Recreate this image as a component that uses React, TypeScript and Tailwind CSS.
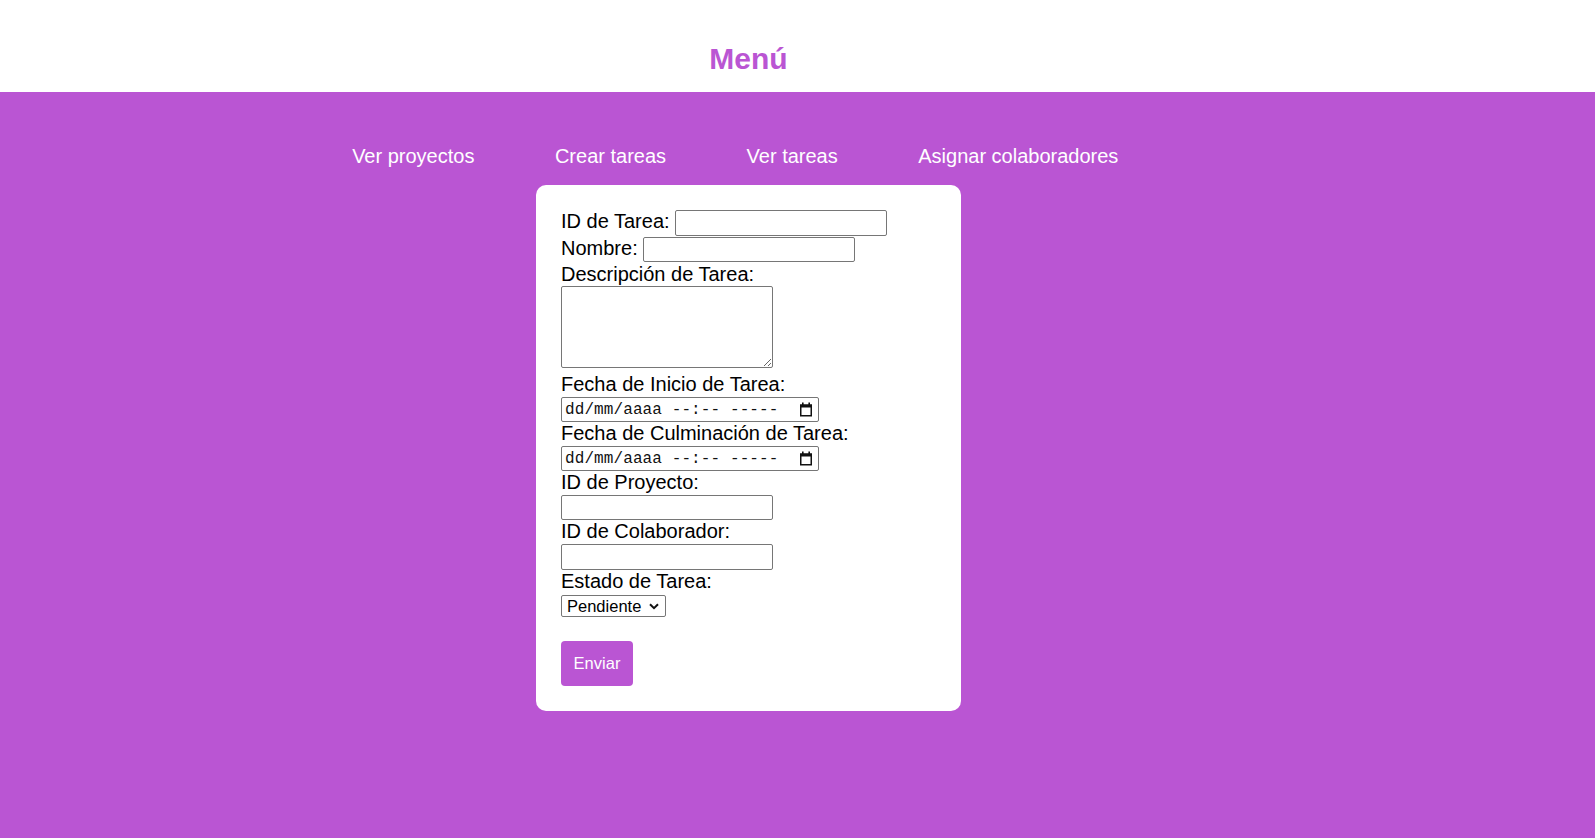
import { ReactNode } from "react";

const purple = "bg-[#ba55d3]";

function Label({ children }: { children: ReactNode }) {
  return <span className="block leading-[23px]">{children}</span>;
}

function TextInput({ w = "w-[212px]", h = "h-[25px]", className = "" }: { w?: string; h?: string; className?: string }) {
  return (
    <input
      type="text"
      className={`${w} ${h} ${className} block border border-[#767676] rounded-[2px] bg-white px-[2px] text-[16px] outline-none`}
    />
  );
}

function CalendarIcon() {
  return (
    <svg width="14" height="15" viewBox="0 0 14 15" fill="none">
      <rect x="1.75" y="3.25" width="10.5" height="10.5" stroke="#111" strokeWidth="1.5" />
      <rect x="1" y="2.5" width="12" height="3" fill="#111" />
      <rect x="3" y="0.5" width="1.6" height="2.5" fill="#111" />
      <rect x="9.4" y="0.5" width="1.6" height="2.5" fill="#111" />
    </svg>
  );
}

function DateBox() {
  return (
    <div className="mt-[1px] w-[258px] h-[25px] border border-[#767676] rounded-[2px] flex items-center justify-between pl-[3px] pr-[5px]">
      <span className="font-['Liberation_Mono',monospace] text-[16px] tracking-[0.1px] leading-none whitespace-pre text-[#111]">
        dd/mm/aaaa --:-- -----
      </span>
      <CalendarIcon />
    </div>
  );
}

export default function App() {
  const links = ["Ver proyectos", "Crear tareas", "Ver tareas", "Asignar colaboradores"];

  return (
    <div className="min-h-screen flex flex-col font-['Liberation_Sans',Arial,sans-serif]">
      {/* Header */}
      <header className="h-[92px] bg-white flex justify-center pr-[98px] pt-[40px]">
        <h1 className="text-[30px] leading-[37px] font-bold text-[#ba55d3]">Menú</h1>
      </header>

      <main className={`flex-1 ${purple} flex flex-col`}>
        {/* Nav */}
        <nav className="flex justify-center gap-[80.5px] pr-[124.5px] pt-[53px] text-white text-[20px] leading-[23px]">
          {links.map((l) => (
            <a key={l} href="#" className="block">
              {l}
            </a>
          ))}
        </nav>

        {/* Form card */}
        <div className="flex justify-center pr-[98px] mt-[17px]">
          <form
            className="w-[425px] bg-white rounded-[10px] px-[25px] pt-[25px] pb-[25px] text-[20px] text-black flex flex-col items-start"
            onSubmit={(e) => e.preventDefault()}
          >
            <div className="flex items-start h-[27px]">
              <span className="leading-[23px]">ID de Tarea:</span>
              <TextInput h="h-[26px]" className="ml-[5px]" />
            </div>
            <div className="flex items-start h-[26px]">
              <span className="leading-[23px]">Nombre:</span>
              <TextInput className="ml-[5px]" />
            </div>

            <Label>Descripción de Tarea:</Label>
            <textarea className="block w-[212px] h-[82px] mb-[5px] border border-[#767676] rounded-[2px] text-[14px] outline-none" />

            <Label>Fecha de Inicio de Tarea:</Label>
            <DateBox />

            <Label>Fecha de Culminación de Tarea:</Label>
            <DateBox />

            <Label>ID de Proyecto:</Label>
            <TextInput className="mt-[1px]" />

            <Label>ID de Colaborador:</Label>
            <TextInput h="h-[26px]" className="mt-[1px]" />

            <Label>Estado de Tarea:</Label>
            <div className="relative mt-[2px]">
              <select className="appearance-none block w-[105px] h-[22px] border border-[#767676] rounded-[2px] bg-white pl-[5px] text-[16.5px] leading-[20px] outline-none">
                <option>Pendiente</option>
                <option>En progreso</option>
                <option>Completada</option>
              </select>
              <svg
                className="absolute right-[7px] top-[8px] pointer-events-none"
                width="10"
                height="7"
                viewBox="0 0 10 7"
                fill="none"
              >
                <path d="M1 1.2 5 5.2 9 1.2" stroke="#111" strokeWidth="2" />
              </svg>
            </div>

            <button
              type="submit"
              className={`mt-[24px] w-[72px] h-[45px] rounded-[4px] ${purple} text-white text-[16.5px] leading-[19px] pb-[1px]`}
            >
              Enviar
            </button>
          </form>
        </div>
      </main>
    </div>
  );
}
